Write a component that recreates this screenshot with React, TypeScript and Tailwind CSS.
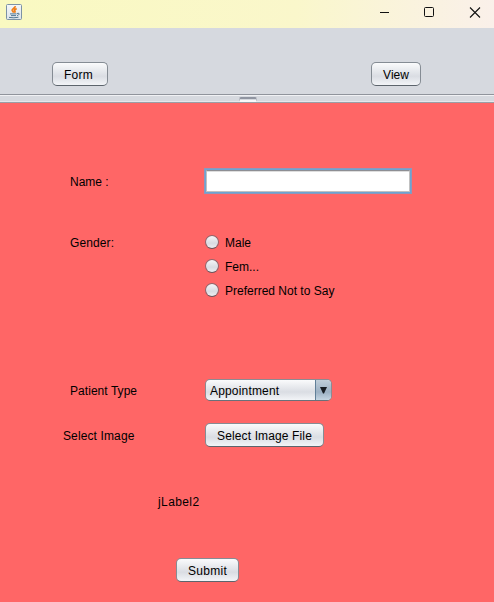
import type { ReactNode } from "react";

function Button({ children, className }: { children: ReactNode; className: string }) {
  return (
    <button
      className={`flex h-6 items-center justify-center whitespace-nowrap rounded-[5px] border border-[#858c94] border-b-[#5c646c] bg-linear-to-b from-[#fafbfc] via-[#dadde3] via-60% to-[#f2f4f7] pt-px leading-[14px] ${className}`}
    >
      {children}
    </button>
  );
}

function Radio({ label }: { label: string }) {
  return (
    <label className="flex h-6 items-center">
      <span className="mr-1.5 h-3.5 w-3.5 shrink-0 rounded-full border border-[#92666c] border-b-[#68555c] bg-linear-to-b from-[#f5f6f8] via-[#d9dce2] via-60% to-[#eceef2]" />
      <span className="whitespace-nowrap pt-px leading-[14px]">{label}</span>
    </label>
  );
}

function JavaIcon() {
  return (
    <svg width="16" height="16" viewBox="0 0 16 16" fill="none">
      <defs>
        <linearGradient id="tile" x1="0" y1="0" x2="0" y2="1">
          <stop stopColor="#f5f7f9" />
          <stop offset="1" stopColor="#dce3ea" />
        </linearGradient>
      </defs>
      <rect x=".5" y=".5" width="15" height="15" rx="1" fill="url(#tile)" stroke="#7c92a5" />
      <path d="M9.2 2.2C9.4 4.2 5.8 4.6 6.2 6.3C6.5 7.2 7.3 7.6 7.5 8.7M10.7 4.7C8.5 5.4 8.1 6.2 8.9 7.1C9.3 7.7 9 8.1 8.5 8.7" stroke="#f07d16" strokeWidth="1.8" />
      <path d="M4 9.9H10.5M5 11.6H10M3 13.4Q8 14.3 12.5 13.2M11 9.5Q13.5 8.7 13.2 10.2Q12.6 11.2 11 11.6" stroke="#527894" strokeWidth="1" />
    </svg>
  );
}

export default function App() {
  return (
    <div className="flex h-[602px] w-[494px] flex-col overflow-hidden bg-[#d6d9df] font-['Liberation_Sans',Arial,sans-serif] text-[12px] text-black">
      <header className="flex h-7 shrink-0 justify-between bg-linear-to-r from-[#f9f9c1] via-[#faf7cb] via-60% to-[#faf0ea] pl-1.5 pt-1">
        <JavaIcon />
        <svg width="110" height="18" viewBox="0 0 110 18" fill="none" stroke="#111" className="mr-1">
          <path d="M-1 8.5H9" />
          <rect x="44.5" y="3.5" width="9" height="9" rx="1" />
          <path d="M90 3.5L100 13.5M100 3.5L90 13.5" strokeWidth="1.1" />
        </svg>
      </header>

      <nav className="flex h-[66px] shrink-0 items-start justify-between pl-[52px] pr-[73px] pt-[34px]">
        <Button className="w-14 pr-[3px] tracking-[0.3px]">Form</Button>
        <Button className="w-[50px]">View</Button>
      </nav>

      <div className="flex h-[9px] shrink-0 justify-center border-b border-t border-b-[#9a9ea6] border-t-[#90949c] shadow-[inset_0_1px_#f0f1f4,inset_0_-1px_#e5e7eb]">
        <span className="ml-0.5 mt-0.5 h-[5px] w-[18px] rounded-t-[2px] border-x border-b-2 border-t-2 border-x-[#b9bcc4] border-b-[#f8f8fa] border-t-[#9095a1] bg-[#d5d8de]" />
      </div>

      <main className="flex min-h-0 flex-1 flex-col bg-[#ff6666] pt-[65px]">
        <div className="flex h-[26px] items-center">
          <label className="w-[204px] pl-[70px] pt-px">Name :</label>
          <div className="flex h-[26px] w-[208px] border border-[#8b98bc] bg-[#6ca4d3] p-px">
            <div className="flex-1 border border-[#c1c1c1] border-t-[#8d8e93] bg-white shadow-[inset_0_1px_#dedede]" />
          </div>
        </div>

        <div className="mt-9 flex">
          <span className="w-[205px] pl-[70px] pt-[6px] leading-[14px] tracking-[0.1px]">Gender:</span>
          <div className="flex flex-col">
            <Radio label="Male" />
            <Radio label="Fem..." />
            <Radio label="Preferred Not to Say" />
          </div>
        </div>

        <div className="mt-[76px] flex h-6 items-center">
          <span className="w-[205px] pl-[70px] pt-px leading-[14px] tracking-[0.05px]">Patient Type</span>
          <div className="flex h-[22px] w-[127px] overflow-hidden rounded-[5px] border border-[#8c8b92] border-b-[#68717a] bg-linear-to-b from-[#fafbfc] via-[#dadde3] via-60% to-[#f2f4f7]">
            <span className="flex-1 pl-1 pt-1 leading-[14px] tracking-[0.17px]">Appointment</span>
            <span className="flex w-4 items-center justify-center border-l border-[#617f98] bg-linear-to-b from-[#c0ced9] via-[#9cb0c3] via-60% to-[#c4d5e2]">
              <svg width="7" height="7" viewBox="0 0 7 7"><path d="M0 0H7L4 6.5H3Z" fill="#171c22" /></svg>
            </span>
          </div>
        </div>

        <div className="mt-[21px] flex h-6 items-center">
          <span className="w-[205px] pl-[63px] pt-px leading-[14px] tracking-[0.12px]">Select Image</span>
          <Button className="w-[119px] tracking-[0.13px]">Select Image File</Button>
        </div>

        <span className="ml-[158px] mt-12 leading-[14px] tracking-[0.4px]">jLabel2</span>
        <Button className="ml-44 mt-[49px] w-[63px] tracking-[0.3px]">Submit</Button>
      </main>
    </div>
  );
}
